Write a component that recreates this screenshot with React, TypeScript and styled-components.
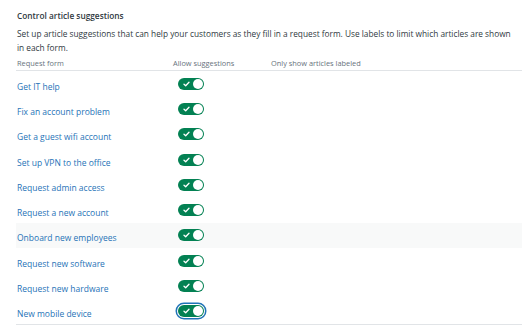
import styled, { createGlobalStyle } from 'styled-components';

const GlobalStyle = createGlobalStyle`
  body {
    margin: 0;
    background: #fff;
    font-family: "Open Sans", "Noto Sans", sans-serif;
  }
`;

const Page = styled.div`
  width: 506px;
  padding: 9px 6px 0 16px;
`;

const Title = styled.h3`
  margin: 0 0 0 1px;
  font-size: 8.3px;
  line-height: 14px;
  font-weight: 600;
  color: #2f3941;
`;

const Description = styled.p`
  margin: 4px 0 0 1px;
  max-width: 496px;
  font-size: 8.3px;
  line-height: 14px;
  color: #2f3941;
`;

const Table = styled.div`
  border-bottom: 1px solid #e1e4e7;
`;

const Row = styled.div<{ $header?: boolean; $hover?: boolean }>`
  display: grid;
  grid-template-columns: 156px 98px 1fr;
  align-items: center;
  height: ${(p) => (p.$header ? '15px' : '25.3px')};
  padding-left: 1px;
  background: ${(p) => (p.$hover ? '#f8f9f9' : 'transparent')};
  border-bottom: ${(p) => (p.$header ? '1px solid #e1e4e7' : 'none')};
`;

const HeadCell = styled.div`
  font-size: 7.4px;
  color: #68737d;
`;

const FormLink = styled.a`
  font-size: 8.5px;
  color: #1f73b7;
  text-decoration: none;
`;

const Toggle = styled.span<{ $focused?: boolean }>`
  position: relative;
  display: block;
  margin-left: 5px;
  width: 26px;
  height: 12px;
  border-radius: 6px;
  background: #038153;
  box-shadow: ${(p) => (p.$focused ? '0 0 0 1px #fff, 0 0 0 2.5px #1f73b7' : 'none')};

  svg {
    position: absolute;
    left: 5px;
    top: 3px;
  }

  &::after {
    content: '';
    position: absolute;
    right: 1px;
    top: 1px;
    width: 10px;
    height: 10px;
    border-radius: 50%;
    background: #fff;
  }
`;

const forms = [
  'Get IT help',
  'Fix an account problem',
  'Get a guest wifi account',
  'Set up VPN to the office',
  'Request admin access',
  'Request a new account',
  'Onboard new employees',
  'Request new software',
  'Request new hardware',
  'New mobile device',
];

const App = () => {
  return (
    <Page>
      <GlobalStyle />
      <Title>Control article suggestions</Title>
      <Description>
        Set up article suggestions that can help your customers as they fill in a request form. Use labels to limit
        which articles are shown in each form.
      </Description>
      <Table>
        <Row $header>
          <HeadCell>Request form</HeadCell>
          <HeadCell>Allow suggestions</HeadCell>
          <HeadCell>Only show articles labeled</HeadCell>
        </Row>
        {forms.map((name, i) => (
          <Row key={name} $hover={i === 6}>
            <div>
              <FormLink href="#">{name}</FormLink>
            </div>
            <div>
              <Toggle $focused={i === forms.length - 1}>
                <svg width="7" height="6" viewBox="0 0 7 6">
                  <path d="M1 3.2 2.7 4.8 6 1.2" fill="none" stroke="#fff" strokeWidth="1.3" strokeLinecap="round" strokeLinejoin="round" />
                </svg>
              </Toggle>
            </div>
            <div />
          </Row>
        ))}
      </Table>
    </Page>
  );
};

export default App;
